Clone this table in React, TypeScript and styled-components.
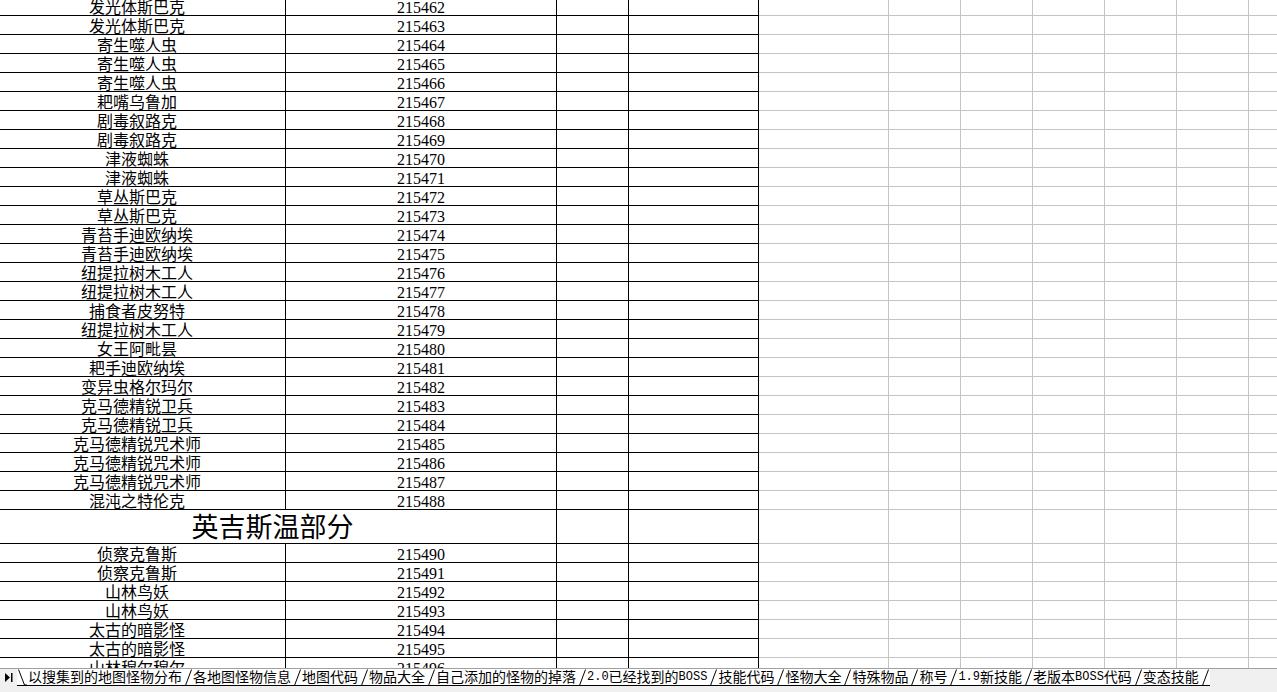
import React from "react";
import styled, { createGlobalStyle } from "styled-components";

const GlobalStyle = createGlobalStyle`
  html, body { margin: 0; padding: 0; background: #fff; overflow: hidden; }
  #root { width: 1277px; height: 692px; }
`;

const Page = styled.div`
  width: 1277px;
  height: 692px;
  display: flex;
  flex-direction: column;
  overflow: hidden;
  font-family: "Liberation Serif", "Noto Sans CJK SC", serif;
  color: #000;
`;

const Sheet = styled.div`
  flex: 1;
  min-height: 0;
  overflow: hidden;
`;

const Grid = styled.div`
  margin: -3px 0 0 -11px;
  display: flex;
  flex-direction: column;
  width: 1332px;
`;

const Row = styled.div<{ $h: number }>`
  display: grid;
  grid-template-columns: 297px 271px 72px 130px 130px repeat(6, 72px);
  height: ${(p) => p.$h}px;
  flex: none;
`;

const Cell = styled.div<{ $span?: number; $gray?: boolean; $big?: boolean }>`
  grid-column: span ${(p) => p.$span ?? 1};
  box-sizing: border-box;
  border-right: 1px solid ${(p) => (p.$gray ? "#c4c4c4" : "#000")};
  border-bottom: 1px solid ${(p) => (p.$gray ? "#c4c4c4" : "#000")};
  display: flex;
  align-items: flex-end;
  justify-content: center;
  white-space: nowrap;
  overflow: hidden;
  font-size: ${(p) => (p.$big ? 27 : 16)}px;
  line-height: ${(p) => (p.$big ? 30 : 14)}px;
`;

const TabBar = styled.div`
  height: 24px;
  flex: none;
  box-sizing: border-box;
  border-top: 1px solid #a0a0a0;
  background: #f0f0f0;
  display: flex;
  flex-direction: column;
`;

const TabStrip = styled.div`
  height: 17px;
  display: flex;
  align-items: stretch;
  padding-left: 5px;
`;

const Tabs = styled.div`
  display: flex;
  align-items: stretch;
  background: #fff;
  border-bottom: 1px solid #000;
  font-size: 14px;
  line-height: 15px;
`;

const NavIcon = styled.div`
  width: 12px;
  display: flex;
  align-items: center;
  background: #f0f0f0;
`;

const TabLabel = styled.span`
  white-space: nowrap;
  display: flex;
  align-items: flex-end;
`;

const Latin = styled.span`
  font-family: "Liberation Mono", monospace;
  font-size: 12px;
`;

const Sep = styled.svg`
  width: 9px;
  height: 17px;
  flex: none;
  margin: 0 1px;
`;

const rows1: [string, number][] = [
  ["发光体斯巴克", 215462],
  ["发光体斯巴克", 215463],
  ["寄生噬人虫", 215464],
  ["寄生噬人虫", 215465],
  ["寄生噬人虫", 215466],
  ["耙嘴乌鲁加", 215467],
  ["剧毒叙路克", 215468],
  ["剧毒叙路克", 215469],
  ["津液蜘蛛", 215470],
  ["津液蜘蛛", 215471],
  ["草丛斯巴克", 215472],
  ["草丛斯巴克", 215473],
  ["青苔手迪欧纳埃", 215474],
  ["青苔手迪欧纳埃", 215475],
  ["纽提拉树木工人", 215476],
  ["纽提拉树木工人", 215477],
  ["捕食者皮努特", 215478],
  ["纽提拉树木工人", 215479],
  ["女王阿毗昙", 215480],
  ["耙手迪欧纳埃", 215481],
  ["变异虫格尔玛尔", 215482],
  ["克马德精锐卫兵", 215483],
  ["克马德精锐卫兵", 215484],
  ["克马德精锐咒术师", 215485],
  ["克马德精锐咒术师", 215486],
  ["克马德精锐咒术师", 215487],
  ["混沌之特伦克", 215488],
];

const rows2: [string, number][] = [
  ["侦察克鲁斯", 215490],
  ["侦察克鲁斯", 215491],
  ["山林鸟妖", 215492],
  ["山林鸟妖", 215493],
  ["太古的暗影怪", 215494],
  ["太古的暗影怪", 215495],
  ["山林穆尔穆尔", 215496],
];

const tabs = [
  "以搜集到的地图怪物分布",
  "各地图怪物信息",
  "地图代码",
  "物品大全",
  "自己添加的怪物的掉落",
  "2.0已经找到的BOSS",
  "技能代码",
  "怪物大全",
  "特殊物品",
  "称号",
  "1.9新技能",
  "老版本BOSS代码",
  "变态技能",
];

const GrayCells = () => (
  <>
    {Array.from({ length: 7 }).map((_, i) => (
      <Cell key={i} $gray />
    ))}
  </>
);

const DataRow = ({ name, id }: { name: string; id: number }) => (
  <Row $h={19}>
    <Cell>{name}</Cell>
    <Cell>{id}</Cell>
    <Cell />
    <Cell />
    <GrayCells />
  </Row>
);

const Slash = ({ back }: { back?: boolean }) => (
  <Sep viewBox="0 0 9 17">
    {back ? (
      <polyline points="0.5,0.5 6.5,16 9,16" fill="none" stroke="#000" strokeWidth="1" />
    ) : (
      <polyline points="0,16.5 2.5,16.5 8.5,0.5" fill="none" stroke="#000" strokeWidth="1" />
    )}
  </Sep>
);

const TabText = ({ text }: { text: string }) => {
  const parts = text.match(/[\x20-\x7e]+|[^\x20-\x7e]+/g) ?? [];
  return (
    <TabLabel>
      {parts.map((p, i) => (/^[\x20-\x7e]+$/.test(p) ? <Latin key={i}>{p}</Latin> : <span key={i}>{p}</span>))}
    </TabLabel>
  );
};

export default function App() {
  return (
    <>
      <GlobalStyle />
      <Page>
        <Sheet>
          <Grid>
            {rows1.map(([n, id]) => (
              <DataRow key={id} name={n} id={id} />
            ))}
            <Row $h={34}>
              <Cell $span={2} $big>
                英吉斯温部分
              </Cell>
              <Cell />
              <Cell />
              <GrayCells />
            </Row>
            {rows2.map(([n, id]) => (
              <DataRow key={id} name={n} id={id} />
            ))}
          </Grid>
        </Sheet>
        <TabBar>
          <TabStrip>
            <NavIcon>
              <svg width="8" height="9" viewBox="0 0 8 9">
                <polygon points="0,0 5,4.5 0,9" fill="#000" />
                <rect x="6" y="0" width="1.5" height="9" fill="#000" />
              </svg>
            </NavIcon>
            <Tabs>
              <Slash back />
              {tabs.map((t) => (
                <React.Fragment key={t}>
                  <TabText text={t} />
                  <Slash />
                </React.Fragment>
              ))}
            </Tabs>
          </TabStrip>
        </TabBar>
      </Page>
    </>
  );
}
